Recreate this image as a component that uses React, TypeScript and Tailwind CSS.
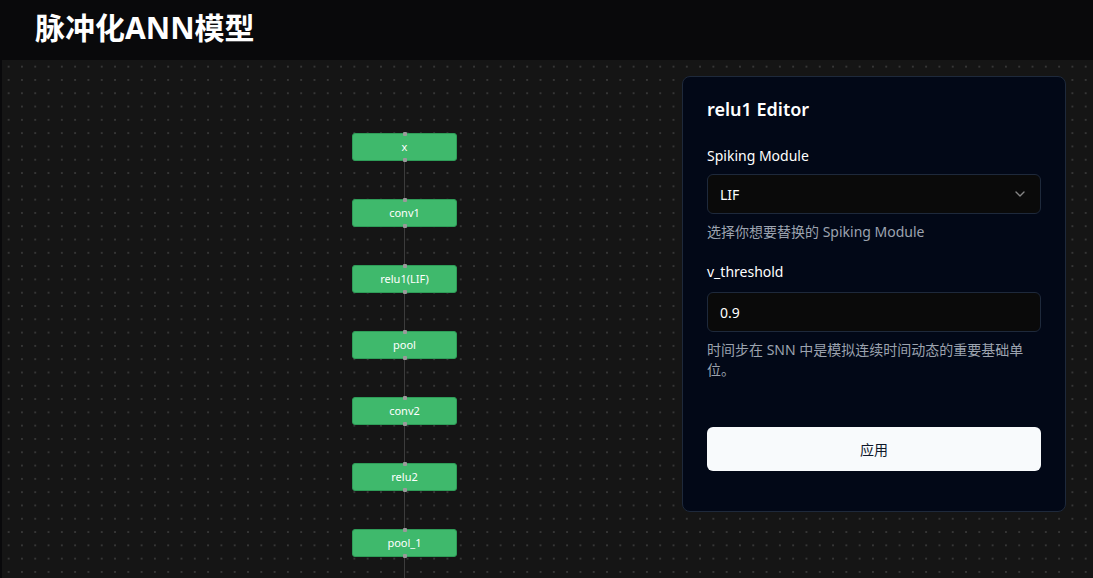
import { ChevronDown } from "lucide-react";

const nodes = ["x", "conv1", "relu1(LIF)", "pool", "conv2", "relu2", "pool_1"];

const FlowNode = ({ label }: { label: string }) => {
  return (
    <div className="relative flex h-[28px] w-[105px] items-center justify-center rounded-[3px] border border-[#2e9d58] bg-[#3fb96c] text-[11px] text-white">
      <span className="absolute left-1/2 top-[-2px] h-[4px] w-[4px] -translate-x-1/2 rounded-[1px] bg-[#9a9a9a]" />
      {label}
      <span className="absolute bottom-[-2px] left-1/2 h-[4px] w-[4px] -translate-x-1/2 rounded-[1px] bg-[#9a9a9a]" />
    </div>
  );
};

const Edge = () => <div className="h-[38px] w-px bg-[#3c3c3c]" />;

export default function App() {
  return (
    <div className="h-[578px] w-[1093px] overflow-hidden bg-[#09090b] font-['Noto_Sans','Noto_Sans_CJK_SC',sans-serif]">
      {/* header */}
      <div className="flex h-[60px] items-center px-[35px] pb-[6px]">
        <h1 className="text-[30px] font-bold text-white">脉冲化ANN模型</h1>
      </div>

      {/* canvas */}
      <div className="ml-[2px] flex h-[518px] items-start overflow-hidden bg-[#151515] bg-[radial-gradient(circle,#363636_0.8px,transparent_1px)] bg-[size:13.3px_13.3px]">
        <div className="ml-[350px] mt-[73px] flex flex-col items-center">
          {nodes.map((n, i) => (
            <div key={n} className="flex flex-col items-center">
              {i > 0 && <Edge />}
              <FlowNode label={n} />
            </div>
          ))}
          <Edge />
        </div>

        <div className="ml-[225px] mt-[16px] w-[384px] rounded-lg border border-[#1e293b] bg-[#020817] px-6 pb-10 pt-[23px] text-white">
          <h2 className="text-[18px] font-semibold leading-[18px]">relu1 Editor</h2>

          <div className="mt-[28px] text-[14px] leading-5">Spiking Module</div>
          <div className="mt-[8px] flex h-10 items-center justify-between rounded-md border border-[#1e293b] bg-[#0a0a0a] px-3 text-[14px]">
            <span>LIF</span>
            <ChevronDown className="h-4 w-4 opacity-50" />
          </div>
          <p className="mt-2 text-[14px] leading-5 text-[#9ca3af]">选择你想要替换的 Spiking Module</p>

          <div className="mt-[20px] text-[14px] leading-5">v_threshold</div>
          <div className="mt-[10px] flex h-10 items-center rounded-md border border-[#1e293b] bg-[#0a0a0a] px-3 text-[14px]">
            0.9
          </div>
          <p className="mt-2 text-[14px] leading-5 text-[#9ca3af]">
            时间步在 SNN 中是模拟连续时间动态的重要基础单位。
          </p>

          <button className="mt-[47px] flex h-11 w-full items-center justify-center rounded-md bg-[#f8fafc] text-[14px] text-[#0f172a]">
            应用
          </button>
        </div>
      </div>
    </div>
  );
}
